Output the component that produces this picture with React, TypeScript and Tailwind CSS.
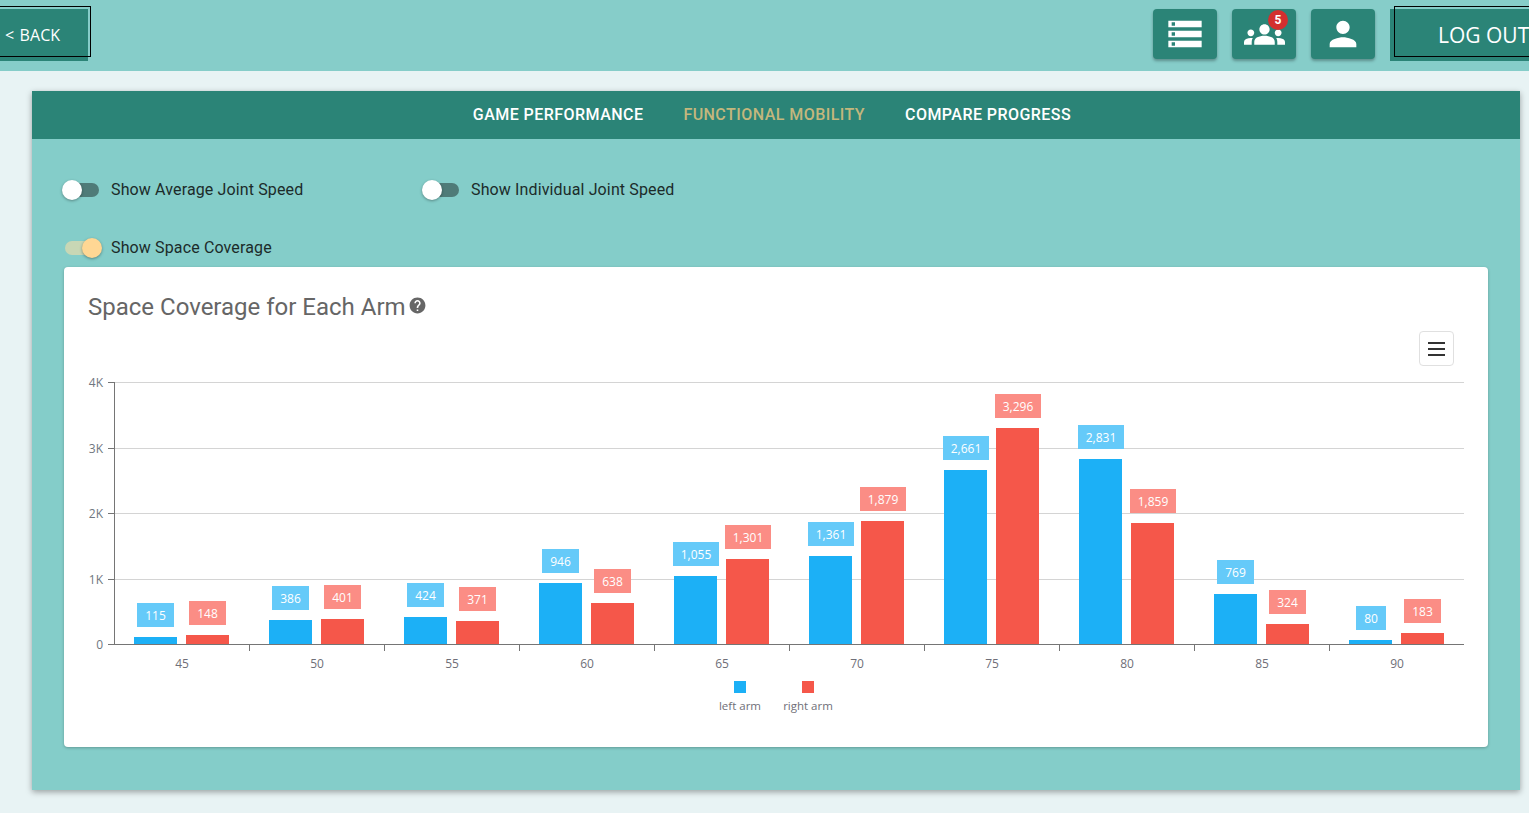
import React from 'react';
import { MdStorage, MdGroups, MdPerson, MdHelp } from 'react-icons/md';

const data = [
  { cat: 45, left: 115, right: 148 },
  { cat: 50, left: 386, right: 401 },
  { cat: 55, left: 424, right: 371 },
  { cat: 60, left: 946, right: 638 },
  { cat: 65, left: 1055, right: 1301 },
  { cat: 70, left: 1361, right: 1879 },
  { cat: 75, left: 2661, right: 3296 },
  { cat: 80, left: 2831, right: 1859 },
  { cat: 85, left: 769, right: 324 },
  { cat: 90, left: 80, right: 183 },
];

const BASE = 645;
const AXIS = 644;
const TOP = 382;
const PLOT_LEFT = 114;
const PLOT_RIGHT = 1464;
const STEP = 135;
const barH = (v: number) => (v * (BASE - TOP)) / 4000;
const font = "'Open Sans', sans-serif";

const Bar = ({ x, value, fill, labelFill }: { x: number; value: number; fill: string; labelFill: string }) => {
  const text = value.toLocaleString('en-US');
  const w = text.length === 2 ? 30 : text.length === 3 ? 37 : 46;
  const top = Math.round(BASE - barH(value));
  const cx = x + 21.5;
  const boxX = Math.ceil(cx - w / 2);
  return (
    <g>
      <rect x={x} y={top} width={43} height={AXIS - top} fill={fill} />
      <rect x={boxX} y={top - 34} width={w} height={24} fill={labelFill} />
      <text x={boxX + w / 2} y={top - 17} textAnchor="middle" fontSize={12} fill="#fff" fontFamily={font}>
        {text}
      </text>
    </g>
  );
};

const Chart = () => (
  <svg viewBox="88 372 1376 351" className="block w-[1376px] h-[351px]">
    {[
      { y: 382, t: '4K' },
      { y: 448, t: '3K' },
      { y: 513, t: '2K' },
      { y: 579, t: '1K' },
      { y: 644, t: '0' },
    ].map((g) => (
      <g key={g.t}>
        {g.y !== AXIS && <line x1={PLOT_LEFT} x2={PLOT_RIGHT} y1={g.y + 0.5} y2={g.y + 0.5} stroke="#d4d4d4" />}
        <line x1={108} x2={PLOT_LEFT} y1={g.y + 0.5} y2={g.y + 0.5} stroke="#757575" />
        <text x={103} y={g.y + 5} textAnchor="end" fontSize={12} fill="#6f7780" fontFamily={font}>
          {g.t}
        </text>
      </g>
    ))}
    {data.map((d, i) => (
      <g key={d.cat}>
        <Bar x={134 + i * STEP} value={d.left} fill="#1cb0f6" labelFill="#65caf9" />
        <Bar x={186 + i * STEP} value={d.right} fill="#f5574a" labelFill="#fb8d85" />
        <text x={182 + i * STEP} y={668} textAnchor="middle" fontSize={12} fill="#6f6f78" fontFamily={font}>
          {d.cat}
        </text>
        {i < 9 && (
          <line x1={249.5 + i * STEP} x2={249.5 + i * STEP} y1={644} y2={651} stroke="#757575" />
        )}
      </g>
    ))}
    <line x1={PLOT_LEFT + 0.5} x2={PLOT_LEFT + 0.5} y1={TOP} y2={AXIS} stroke="#757575" />
    <line x1={108} x2={PLOT_RIGHT} y1={AXIS + 0.5} y2={AXIS + 0.5} stroke="#757575" />
    <rect x={734} y={681} width={12} height={12} fill="#1cb0f6" />
    <rect x={802} y={681} width={12} height={12} fill="#f5574a" />
    <text x={740} y={710} textAnchor="middle" fontSize={11.5} fill="#6f6f78" fontFamily={font}>
      left arm
    </text>
    <text x={808} y={710} textAnchor="middle" fontSize={11.5} fill="#6f6f78" fontFamily={font}>
      right arm
    </text>
  </svg>
);

const Toggle = ({ label, on }: { label: string; on?: boolean }) => (
  <div className="flex items-center h-5 -ml-[2px]">
    <div className="relative w-[49px] h-5">
      <div
        className={`absolute left-[3px] top-[3px] w-[34px] h-[14px] rounded-full ${
          on ? 'bg-[#c8d7b5]' : 'bg-[#4f7b78]'
        }`}
      />
      <div
        className={`absolute top-0 w-5 h-5 rounded-full shadow-[0_1px_3px_rgba(0,0,0,0.35)] ${
          on ? 'left-5 bg-[#ffd794]' : 'left-0 bg-white'
        }`}
      />
    </div>
    <span className="text-base tracking-[0.13px] text-[#1c2b2a]">{label}</span>
  </div>
);

const IconButton = ({ children }: { children: React.ReactNode }) => (
  <button className="relative flex items-center justify-center w-16 h-[50px] rounded bg-[#2b8477] text-white shadow-[0_2px_3px_rgba(0,0,0,0.3)]">
    {children}
  </button>
);

const App = () => {
  return (
    <div className="min-h-[813px] overflow-hidden bg-[#e8f3f4] font-['Roboto',sans-serif]">
      <header className="flex items-start justify-between h-[71px] bg-[#86cdc9] pt-[9px]">
        <button className="relative w-[88px] h-[52px] bg-[#2b8477] text-white text-base text-left pl-[5px] tracking-[0.1px] [word-spacing:1px] font-['Open_Sans',sans-serif]">
          &lt; BACK
          <span className="absolute left-[-4px] top-[-3px] w-[95px] h-[51px] border border-black" />
        </button>
        <div className="flex items-start">
          <div className="flex gap-[15px] mr-[15px]">
            <IconButton>
              <MdStorage size={40} />
            </IconButton>
            <IconButton>
              <MdGroups size={41} />
              <span className="absolute left-[36px] top-[1px] flex items-center justify-center w-5 h-5 rounded-full bg-[#d32f2f] text-xs font-bold">
                5
              </span>
            </IconButton>
            <IconButton>
              <MdPerson size={40} />
            </IconButton>
          </div>
          <button className="relative w-[139px] h-[52px] bg-[#2b8477] text-white text-[21px] text-left pl-[48px] pt-[2px] font-['Open_Sans',sans-serif] whitespace-nowrap">
            LOG OUT
            <span className="absolute left-[4px] top-[-3px] w-[150px] h-[51px] border border-black" />
          </button>
        </div>
      </header>

      <main className="mx-[32px] mt-[20px] mb-[23px] w-[1488px] bg-[#84cdc9] shadow-[0_2px_6px_rgba(0,0,0,0.35)]">
        <nav className="flex justify-center gap-10 h-12 items-center pr-2 bg-[#2b8477] text-base font-medium tracking-[0.45px] text-white">
          <span>GAME PERFORMANCE</span>
          <span className="text-[#c4b77d]">FUNCTIONAL MOBILITY</span>
          <span>COMPARE PROGRESS</span>
        </nav>
        <div className="px-8 pt-[41px] pb-[43px]">
          <div className="flex">
            <div className="w-[360px]">
              <Toggle label="Show Average Joint Speed" />
            </div>
            <Toggle label="Show Individual Joint Speed" />
          </div>
          <div className="mt-[38px] mb-[9px]">
            <Toggle label="Show Space Coverage" on />
          </div>
          <section className="bg-white rounded p-6 shadow-[0_1px_3px_rgba(0,0,0,0.25)]">
            <h2 className="flex items-center h-8 text-2xl font-normal text-[#666]">
              Space Coverage for Each Arm
              <MdHelp size={19} className="ml-[2px] mb-1 text-[#666]" />
            </h2>
            <div className="flex justify-end mt-2 mb-[6px] pr-[10px]">
              <button className="flex flex-col items-center justify-center gap-[4px] w-[35px] h-[35px] rounded border border-[#e0e0e0]">
                <span className="block w-[17px] h-[2px] bg-[#333]" />
                <span className="block w-[17px] h-[2px] bg-[#333]" />
                <span className="block w-[17px] h-[2px] bg-[#333]" />
              </button>
            </div>
            <Chart />
          </section>
        </div>
      </main>
    </div>
  );
};

export default App;
